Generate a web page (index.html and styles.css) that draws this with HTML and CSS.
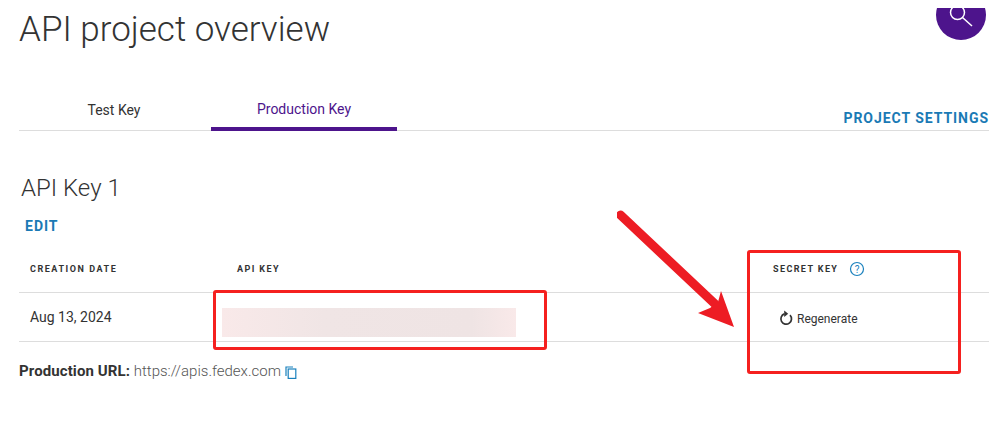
FILE: index.html

```html
<!DOCTYPE html>
<html lang="en">
<head>
    <meta charset="UTF-8">
    <meta name="viewport" content="width=device-width, initial-scale=1.0">
    <title>API project overview</title>
    <link rel="stylesheet" href="styles.css">
</head>
<body>

<div class="search-clip">
    <div class="search-btn">
        <svg width="26" height="26" viewBox="0 0 26 26" fill="none" stroke="#fff" stroke-width="1.5">
            <circle cx="8.5" cy="8.5" r="7"/>
            <path d="M13.5 13.5l9.5 8.5"/>
        </svg>
    </div>
</div>

<header>
    <h1>API project overview</h1>
</header>

<div class="tabs">
    <div class="tab">Test Key</div>
    <div class="tab active">Production Key</div>
    <a class="settings">PROJECT SETTINGS</a>
</div>

<h2>API Key 1</h2>
<a class="edit">EDIT</a>

<div class="key-table">
    <div class="row head">
        <div class="col-date">CREATION DATE</div>
        <div class="col-key">API KEY</div>
        <div class="col-secret">SECRET KEY
            <svg class="help" width="16" height="16" viewBox="0 0 16 16">
                <circle cx="8" cy="8" r="6.5" fill="none" stroke="#1a81bd" stroke-width="1.2"/>
                <text x="8" y="11.5" text-anchor="middle">?</text>
            </svg>
        </div>
    </div>
    <div class="row body">
        <div class="col-date">Aug 13, 2024</div>
        <div class="col-key"><div class="masked"></div></div>
        <div class="col-secret regen">
            <svg width="14" height="16" viewBox="0 0 14 16" fill="none" stroke="#333" stroke-width="1.7">
                <path d="M11 5.2a5.3 5.3 0 1 1-5.6-1.3"/>
                <path d="M5.2 0.6v6.4l4-3.2z" fill="#333" stroke="none"/>
            </svg>
            <span>Regenerate</span>
        </div>
    </div>
</div>

<p class="prod-url"><b>Production URL:</b> <span>https://apis.fedex.com</span>
    <svg width="12" height="13" viewBox="0 0 12 13" fill="none" stroke="#1a81bd" stroke-width="1.2">
        <path d="M1 10V1h7"/>
        <rect x="3.2" y="3" width="7.6" height="9.4"/>
    </svg>
</p>

<!-- red annotations drawn over the screenshot -->
<div class="mark mark-key"></div>
<div class="mark mark-secret"></div>
<svg class="arrow" width="140" height="130" viewBox="0 0 140 130">
    <path d="M3.5 5L98 94" stroke="#ed1c24" stroke-width="9" stroke-linecap="round"/>
    <path d="M117 117L81 103L93 98L101 92L104 81z" fill="#ed1c24"/>
</svg>

</body>
</html>
```

FILE: styles.css

```css
body {
    font-family: Roboto, Arial, sans-serif;
    margin: 0;
    padding: 0 10px 0 19px;
    background-color: #fff;
    color: #333;
    height: 429px;
    box-sizing: border-box;
    overflow: hidden;
    position: relative;
}
header {
    height: 93px;
}
h1 {
    margin: 0;
    padding-top: 8px;
    font-size: 35px;
    line-height: 44px;
    font-weight: 300;
    color: #333;
}
.search-clip {
    position: absolute;
    top: 8px;
    left: 936px;
    width: 50px;
    height: 32px;
    overflow: hidden;
}
.search-btn {
    margin-top: -18px;
    width: 50px;
    height: 50px;
    border-radius: 50%;
    background: #4d148c;
}
.search-btn svg {
    display: block;
    padding: 14px 0 0 13px;
}
.tabs {
    display: flex;
    height: 37px;
    border-bottom: 1px solid #ddd;
    font-size: 14px;
}
.tab {
    width: 192px;
    height: 33px;
    line-height: 34px;
    text-align: center;
    color: #333;
    padding-right: 2px;
    box-sizing: border-box;
}
.tab.active {
    width: 186px;
    height: 38px;
    padding-right: 0;
    color: #4d148c;
    line-height: 32px;
    border-bottom: 4px solid #4d148c;
}
.settings {
    margin-left: auto;
    margin-top: 17px;
    font-size: 14px;
    line-height: 17px;
    font-weight: 700;
    letter-spacing: 0.95px;
    color: #1a7ab5;
}
h2 {
    margin: 42px 0 0 2px;
    font-size: 24px;
    line-height: 30px;
    font-weight: 300;
    color: #333;
}
.edit {
    display: block;
    margin: 15px 0 0 6px;
    font-size: 14px;
    line-height: 17px;
    font-weight: 700;
    letter-spacing: 1px;
    color: #1a7ab5;
}
.key-table {
    margin-top: 26px;
}
.row {
    display: flex;
    border-bottom: 1px solid #ddd;
}
.row.head {
    height: 31px;
    font-size: 9px;
    font-weight: 700;
    letter-spacing: 1.4px;
    line-height: 16px;
}
.row.head .col-date {
    letter-spacing: 1.55px;
}
.row.body {
    height: 48px;
    font-size: 14px;
    align-items: center;
}
.col-date {
    width: 207px;
    padding-left: 11px;
    box-sizing: border-box;
}
.col-key {
    width: 536px;
}
.row.head .col-key {
    padding-left: 11px;
}
.col-secret {
    display: flex;
    align-items: flex-start;
}
.help {
    margin-left: 11px;
}
.help text {
    font-size: 10px;
    font-weight: 400;
    letter-spacing: 0;
    fill: #1a81bd;
}
.masked {
    margin: 10px 0 0 -4px;
    width: 294px;
    height: 29px;
    background: linear-gradient(90deg, #f9e9e9, #f0e5e5 35%, #efe4e4 85%, #f9e9e9);
}
.regen {
    align-items: center;
    font-size: 12px;
    gap: 4px;
    padding: 3px 0 0 17px;
}
.regen svg {
    margin-top: -2px;
}
.prod-url {
    margin: 20px 0 0;
    font-size: 15px;
    line-height: 18px;
    color: #555;
}
.prod-url b {
    color: #333;
    letter-spacing: 0.1px;
}
.prod-url span {
    font-weight: 300;
}
.prod-url svg {
    vertical-align: -3px;
}
.mark {
    position: absolute;
    border: 3px solid #f5201f;
    border-radius: 3px;
    box-sizing: border-box;
}
.mark-key {
    left: 213px;
    top: 290px;
    width: 334px;
    height: 60px;
}
.mark-secret {
    left: 747px;
    top: 250px;
    width: 214px;
    height: 124px;
}
.arrow {
    position: absolute;
    left: 617px;
    top: 210px;
}
```
